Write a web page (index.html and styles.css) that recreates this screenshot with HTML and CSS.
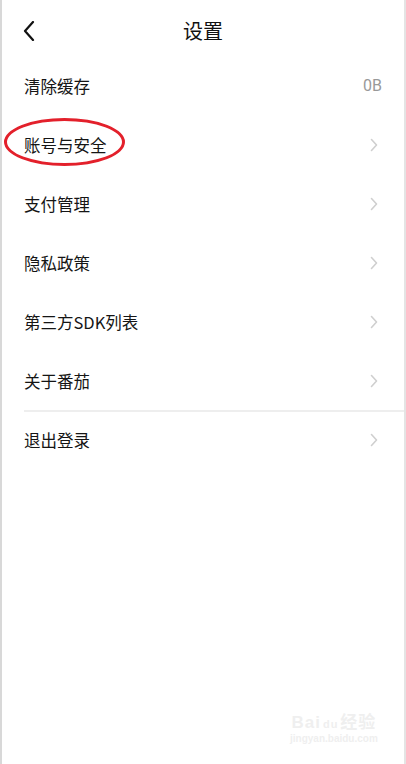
FILE: index.html
```html
<!DOCTYPE html>
<html lang="zh-CN">
<head>
  <meta charset="UTF-8" />
  <meta name="viewport" content="width=device-width, initial-scale=1.0">
  <title>设置</title>
  <link rel="stylesheet" href="styles.css">
</head>
<body>

<div class="screen">
  <div class="topbar">
    <svg class="back" width="12" height="20" viewBox="0 0 12 20">
      <path d="M10 1 L2 10 L10 19" fill="none" stroke="#111" stroke-width="2.2" stroke-linecap="round" stroke-linejoin="round"/>
    </svg>
    <div class="title">设置</div>
  </div>

  <div class="list">
    <div class="row">
      <span class="label">清除缓存</span>
      <span class="value">0B</span>
    </div>
    <div class="row">
      <span class="label">账号与安全</span>
      <svg class="chev" width="8" height="14" viewBox="0 0 8 14"><path d="M1.5 1.5 L6.5 7 L1.5 12.5" /></svg>
      <div class="mark"></div>
    </div>
    <div class="row">
      <span class="label">支付管理</span>
      <svg class="chev" width="8" height="14" viewBox="0 0 8 14"><path d="M1.5 1.5 L6.5 7 L1.5 12.5" /></svg>
    </div>
    <div class="row">
      <span class="label">隐私政策</span>
      <svg class="chev" width="8" height="14" viewBox="0 0 8 14"><path d="M1.5 1.5 L6.5 7 L1.5 12.5" /></svg>
    </div>
    <div class="row">
      <span class="label">第三方SDK列表</span>
      <svg class="chev" width="8" height="14" viewBox="0 0 8 14"><path d="M1.5 1.5 L6.5 7 L1.5 12.5" /></svg>
    </div>
    <div class="row">
      <span class="label">关于番茄</span>
      <svg class="chev" width="8" height="14" viewBox="0 0 8 14"><path d="M1.5 1.5 L6.5 7 L1.5 12.5" /></svg>
    </div>
    <div class="divider"></div>
    <div class="row">
      <span class="label">退出登录</span>
      <svg class="chev" width="8" height="14" viewBox="0 0 8 14"><path d="M1.5 1.5 L6.5 7 L1.5 12.5" /></svg>
    </div>
  </div>

  <div class="watermark">
    <div class="wm-logo">Bai<span class="paw">du</span>经验</div>
    <div class="wm-url">jingyan.baidu.com</div>
  </div>
</div>

</body>
</html>
```

FILE: styles.css
```css
* { margin: 0; padding: 0; box-sizing: border-box; }
html, body {
  height: 100%;
  overflow: hidden;
  background: #fff;
  font-family: "Noto Sans CJK SC", Roboto, sans-serif;
}

.screen {
  position: relative;
  width: 406px;
  height: 764px;
  background: #fff;
  border-left: 2px solid #d8d8d8;
  border-right: 2px solid #e4e4e4;
  overflow: hidden;
}

.topbar {
  position: relative;
  height: 56px;
  display: flex;
  align-items: center;
  justify-content: center;
  padding-top: 6px;
}

.back {
  position: absolute;
  left: 21px;
  top: 21px;
}

.title {
  font-size: 20px;
  color: #111;
  line-height: 1;
}

.list {
  padding-left: 22px;
}

.row {
  position: relative;
  height: 59px;
  display: flex;
  align-items: center;
  justify-content: space-between;
  padding-right: 26px;
}

.label {
  font-size: 16.5px;
  color: #151515;
}

.value {
  font-family: Roboto, "Noto Sans", sans-serif;
  font-size: 16px;
  color: #999;
  margin-right: -4px;
}

.chev {
  fill: none;
  stroke: #cfcfcf;
  stroke-width: 1.6;
  stroke-linecap: round;
  stroke-linejoin: round;
}

.divider {
  height: 2px;
  background: #eeeeee;
  margin-bottom: -2px;
}

.mark {
  position: absolute;
  left: -20px;
  top: 3px;
  width: 121px;
  height: 48px;
  border: 3px solid #e3202b;
  border-radius: 50%;
}

.watermark {
  position: absolute;
  left: 288px;
  top: 708px;
  color: #efefef;
  text-align: center;
}

.wm-logo {
  font-family: "Liberation Sans", "Noto Sans CJK SC", sans-serif;
  font-size: 17px;
  font-weight: bold;
  letter-spacing: 1px;
}

.paw {
  font-size: 11px;
  margin: 0 2px;
}

.wm-url {
  font-family: "Liberation Sans", sans-serif;
  font-size: 10px;
  font-weight: bold;
}
```
